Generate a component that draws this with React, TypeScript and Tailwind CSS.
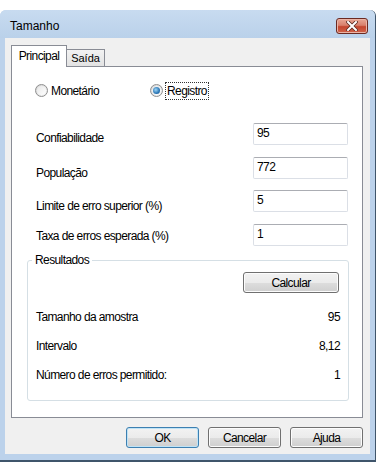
import React from 'react';

const uiFont = { fontFamily: '"Liberation Sans", Arial, sans-serif' };

const fields = [
  { label: 'Confiabilidade', value: '95', mt: 'mt-[26px]', lt: 'mt-[8px]' },
  { label: 'População', value: '772', mt: 'mt-[12px]', lt: 'mt-[9px]' },
  { label: 'Limite de erro superior (%)', value: '5', mt: 'mt-[11px]', lt: 'mt-[9px]' },
  { label: 'Taxa de erros esperada (%)', value: '1', mt: 'mt-[12px]', lt: 'mt-[5px]' },
];

const results = [
  { label: 'Tamanho da amostra', value: '95', mt: 'mt-[17px]' },
  { label: 'Intervalo', value: '8,12', mt: 'mt-[15px]' },
  { label: 'Número de erros permitido:', value: '1', mt: 'mt-[15px]' },
];

function Radio({ checked }: { checked?: boolean }) {
  return (
    <span className="w-[13px] h-[13px] rounded-full border border-[#8f8f8f] bg-gradient-to-br from-[#d4d4d4] to-[#f7f7f7] flex items-center justify-center shrink-0">
      <span className="w-[9px] h-[9px] rounded-full bg-gradient-to-br from-[#e8e8e8] to-[#ffffff] flex items-center justify-center">
        {checked && (
          <span className="w-[7px] h-[7px] rounded-full bg-[radial-gradient(circle_at_40%_40%,#9fd6f7,#2a76b5_60%,#1c4f86)]" />
        )}
      </span>
    </span>
  );
}

function WinButton({ children, isDefault, className }: { children: React.ReactNode; isDefault?: boolean; className?: string }) {
  return (
    <div
      className={`h-[21px] rounded-[3px] border flex items-center justify-center text-[12px] tracking-[-0.6px] leading-none text-black ${
        isDefault ? 'border-[#3c7fb1] shadow-[inset_0_0_0_1px_#bfe3f6]' : 'border-[#707070] shadow-[inset_0_0_0_1px_#fcfcfc]'
      } bg-[linear-gradient(to_bottom,#f2f2f2_0%,#ebebeb_50%,#dddddd_51%,#cfcfcf_100%)] ${className ?? ''}`}
    >
      {children}
    </div>
  );
}

export default function App() {
  return (
    <div className="w-[377px] h-[463px] bg-white pt-[10px] overflow-hidden" style={uiFont}>
      <div className="w-[376px] h-[452px] bg-[#bcd2eb] border-r border-b-2 border-[#3f556b] rounded-t-[6px] flex flex-col">
        {/* Title bar */}
        <div className="h-[28px] flex items-start bg-gradient-to-b from-[#c8dbf0] to-[#bad1ea] rounded-t-[6px]">
          <span className="ml-[10px] mt-[8px] text-[12px] leading-[16px] text-black">Tamanho</span>
          <div className="ml-auto mr-[7px] mt-[8px] w-[32px] h-[16px] rounded-[3px] border border-[#6b2a22] bg-[linear-gradient(to_bottom,#e8a795_0%,#d9806c_45%,#c4452e_55%,#d0654c_100%)] flex items-center justify-center shadow-[inset_0_0_0_1px_#eab4a6]">
            <svg width="12" height="10" viewBox="0 0 12 10">
              <path d="M2 1 L10 9 M10 1 L2 9" stroke="#5a2a22" strokeWidth="3.6" strokeLinecap="square" />
              <path d="M2 1 L10 9 M10 1 L2 9" stroke="#ffffff" strokeWidth="2" strokeLinecap="square" />
            </svg>
          </div>
        </div>

        {/* Client area */}
        <div className="mx-[5px] h-[416px] bg-[#f0f0f0] pl-[6px] pt-[7px] flex flex-col">
          {/* Tabs */}
          <div className="h-[21px] flex items-end relative z-10">
            <div className="w-[56px] h-[22px] -mb-px bg-white border border-b-0 border-[#898c95] flex items-start justify-center pt-[3px] text-[12px] tracking-[-0.6px] leading-[15px] text-black">
              Principal
            </div>
            <div className="w-[38px] h-[17px] bg-gradient-to-b from-[#f2f2f2] to-[#e3e3e3] border border-b-0 border-l-0 border-[#898c95] flex items-start justify-center pt-[1px] text-[11px] leading-[15px] text-black">
              Saída
            </div>
          </div>

          {/* Tab panel */}
          <div className="w-[352px] h-[352px] bg-white border border-[#898c95] flex flex-col text-[12px] tracking-[-0.6px] text-black">
            <div className="pt-[17px] pl-[23px] flex items-center h-[30px]">
              <div className="w-[115px] flex items-center gap-[3px]">
                <Radio />
                <span className="leading-[14px]">Monetário</span>
              </div>
              <div className="flex items-center gap-[2px]">
                <Radio checked />
                <span className="leading-[14px] px-[1px] py-[1px] border border-dotted border-[#333]">Registro</span>
              </div>
            </div>

            {fields.map((f) => (
              <div key={f.label} className={`${f.mt} h-[22px] flex items-start`}>
                <span className={`${f.lt} pl-[24px] leading-[14px]`}>{f.label}</span>
                <div className="ml-auto mr-[14px] w-[95px] h-[22px] rounded-[2px] border border-[#dbdfe6] border-t-[#abadb3] bg-white pl-[3px] pt-[2px] leading-[14px]">
                  {f.value}
                </div>
              </div>
            ))}

            {/* Resultados group */}
            <fieldset className="mt-[7px] ml-[15px] w-[322px] h-[148px] border border-[#d5dfe5] rounded-[3px] flex flex-col">
              <legend className="ml-[4px] px-[3px] leading-[14px]">Resultados</legend>
              <WinButton className="self-end mr-[9px] mt-[5px] w-[96px]">Calcular</WinButton>
              {results.map((r) => (
                <div key={r.label} className={`${r.mt} h-[14px] flex items-center justify-between pl-[8px] pr-[8px] leading-[14px]`}>
                  <span>{r.label}</span>
                  <span>{r.value}</span>
                </div>
              ))}
            </fieldset>
          </div>

          {/* Dialog buttons */}
          <div className="mt-[9px] w-[352px] flex justify-end gap-[9px]">
            <WinButton isDefault className="w-[73px]">OK</WinButton>
            <WinButton className="w-[73px]">Cancelar</WinButton>
            <WinButton className="w-[73px]">Ajuda</WinButton>
          </div>
        </div>
      </div>
    </div>
  );
}
